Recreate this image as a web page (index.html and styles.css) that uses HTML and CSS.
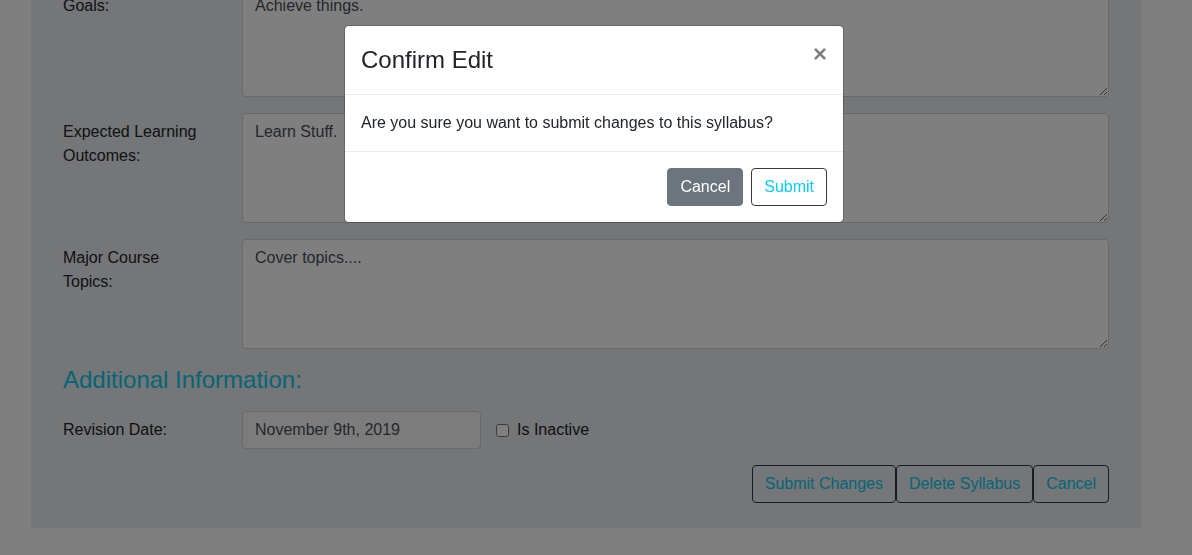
FILE: index.html
```html
<!DOCTYPE html>
<html lang="en">
<head>
<meta charset="utf-8">
<title>Edit Syllabus</title>
<link rel="stylesheet" href="styles.css">
</head>
<body>
<div class="page">
  <div class="card">
    <div class="form-row">
      <label class="col-label">Goals:</label>
      <textarea class="control area">Achieve things.</textarea>
    </div>
    <div class="form-row">
      <label class="col-label">Expected Learning Outcomes:</label>
      <textarea class="control area">Learn Stuff.</textarea>
    </div>
    <div class="form-row">
      <label class="col-label">Major Course Topics:</label>
      <textarea class="control area">Cover topics....</textarea>
    </div>
    <h4 class="section-title">Additional Information:</h4>
    <div class="form-row">
      <label class="col-label">Revision Date:</label>
      <div class="date-group">
        <input class="control date" type="text" value="November 9th, 2019">
        <label class="check"><input type="checkbox" class="check-box"><span>Is Inactive</span></label>
      </div>
    </div>
    <div class="actions">
      <button class="btn btn-outline">Submit Changes</button>
      <button class="btn btn-outline">Delete Syllabus</button>
      <button class="btn btn-outline">Cancel</button>
    </div>
  </div>
</div>

<div class="backdrop"></div>

<div class="modal">
  <div class="modal-header">
    <h5 class="modal-title">Confirm Edit</h5>
    <button class="close" aria-label="Close">&times;</button>
  </div>
  <div class="modal-body">Are you sure you want to submit changes to this syllabus?</div>
  <div class="modal-footer">
    <button class="btn btn-secondary">Cancel</button>
    <button class="btn btn-submit">Submit</button>
  </div>
</div>
</body>
</html>
```
FILE: styles.css
```css
* { box-sizing: border-box; }

html, body {
  margin: 0;
  height: 100%;
  overflow: hidden;
}

body {
  background: #ffffff;
  color: #212529;
  font-family: "Liberation Sans", Arial, sans-serif;
  font-size: 16px;
  line-height: 1.5;
}

.page {
  padding: 0;
}

.card {
  margin: -33px 0 0 31px;
  width: 1110px;
  background: #e9ecef;
  border-radius: 4px;
  padding: 20px 32px 25px 32px;
}

.form-row {
  display: grid;
  grid-template-columns: 149px 1fr;
  column-gap: 30px;
  margin-bottom: 16px;
}

.col-label {
  padding-top: 7px;
  line-height: 24px;
}

.control {
  display: block;
  font-family: inherit;
  font-size: 16px;
  line-height: 24px;
  color: #495057;
  background: #ffffff;
  border: 1px solid #ced4da;
  border-radius: 4px;
  padding: 6px 12px;
  margin: 0;
}

.area {
  width: 100%;
  height: 110px;
  resize: vertical;
}

.section-title {
  margin: 0 0 17px 0;
  font-size: 24px;
  font-weight: 400;
  line-height: 29px;
  color: #0dcaf0;
}

.date-group {
  display: flex;
  align-items: center;
}

.date {
  width: 239px;
  height: 38px;
  background: #f8f9fa;
}

.check {
  display: flex;
  align-items: center;
  margin-left: 15px;
  gap: 8px;
  line-height: 24px;
}

.check-box {
  margin: 0;
  width: 13px;
  height: 13px;
}

.actions {
  display: flex;
  justify-content: flex-end;
  margin-top: 16px;
}

.btn {
  font-family: inherit;
  font-size: 16px;
  line-height: 24px;
  padding: 6px 12px;
  border-radius: 4px;
  border: 1px solid transparent;
  margin: 0;
  cursor: pointer;
}

.btn-outline {
  background: transparent;
  border-color: #343a40;
  color: #0dcaf0;
}

.backdrop {
  position: fixed;
  inset: 0;
  background: rgba(0, 0, 0, 0.5);
}

.modal {
  position: absolute;
  top: 25px;
  left: 344px;
  width: 500px;
  background: #ffffff;
  border: 1px solid rgba(0, 0, 0, 0.2);
  border-radius: 5px;
  background-clip: padding-box;
}

.modal-header {
  display: flex;
  align-items: flex-start;
  justify-content: space-between;
  padding: 16px;
  border-bottom: 1px solid #e9ecef;
}

.modal-title {
  margin: 0;
  font-size: 24px;
  font-weight: 400;
  line-height: 36px;
  color: #212529;
}

.close {
  padding: 16px;
  margin: -16px -16px -16px auto;
  background: transparent;
  border: 0;
  font-family: inherit;
  font-size: 24px;
  font-weight: 700;
  line-height: 1;
  color: #000000;
  opacity: 0.5;
  text-shadow: 0 1px 0 #ffffff;
  cursor: pointer;
}

.modal-body {
  padding: 16px;
}

.modal-footer {
  display: flex;
  justify-content: flex-end;
  align-items: center;
  gap: 8px;
  padding: 16px;
  border-top: 1px solid #e9ecef;
}

.btn-secondary {
  background: #6c757d;
  border-color: #6c757d;
  color: #ffffff;
}

.btn-submit {
  background: #ffffff;
  border-color: #343a40;
  color: #0dcaf0;
}
```
